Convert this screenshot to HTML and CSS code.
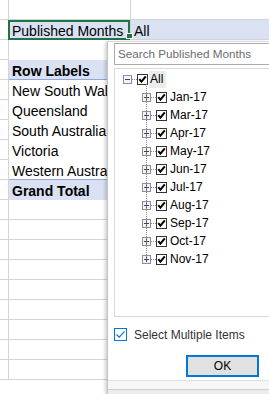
FILE: index.html
```html
<!DOCTYPE html>
<html>
<head>
<meta charset="utf-8">
<link rel="stylesheet" href="styles.css">
</head>
<body>
<svg class="defs" width="0" height="0">
  <symbol id="plus" viewBox="0 0 9 9">
    <rect x="0.5" y="0.5" width="8" height="8" fill="#f4f4f4" stroke="#8e8e8e"/>
    <path d="M2 4.5h5M4.5 2v5" stroke="#34456f" stroke-width="1"/>
  </symbol>
  <symbol id="minus" viewBox="0 0 9 9">
    <rect x="0.5" y="0.5" width="8" height="8" fill="#f4f4f4" stroke="#7f8fb0"/>
    <path d="M2 4.5h5" stroke="#34456f" stroke-width="1"/>
  </symbol>
  <symbol id="check" viewBox="0 0 11 11">
    <rect x="0.5" y="0.5" width="10" height="10" fill="#fff" stroke="#333"/>
    <path d="M2.3 5.2 L4.4 7.6 L8.8 2.4" fill="none" stroke="#000" stroke-width="2"/>
  </symbol>
</svg>

<div class="sheet">
  <div class="row"><div class="c"></div><div class="c"></div><div class="c"></div></div>
  <div class="row"><div class="c"></div><div class="c blue sel">Published Months</div><div class="c blue">All</div></div>
  <div class="row"><div class="c"></div><div class="c pv"></div><div class="c"></div></div>
  <div class="row"><div class="c"></div><div class="c pv head">Row Labels</div><div class="c"></div></div>
  <div class="row"><div class="c"></div><div class="c pv">New South Wales</div><div class="c"></div></div>
  <div class="row"><div class="c"></div><div class="c pv">Queensland</div><div class="c"></div></div>
  <div class="row"><div class="c"></div><div class="c pv">South Australia</div><div class="c"></div></div>
  <div class="row"><div class="c"></div><div class="c pv">Victoria</div><div class="c"></div></div>
  <div class="row"><div class="c"></div><div class="c pv last">Western Australia</div><div class="c"></div></div>
  <div class="row"><div class="c"></div><div class="c pv total">Grand Total</div><div class="c"></div></div>
  <div class="row"><div class="c"></div><div class="c"></div><div class="c"></div></div>
  <div class="row"><div class="c"></div><div class="c"></div><div class="c"></div></div>
  <div class="row"><div class="c"></div><div class="c"></div><div class="c"></div></div>
  <div class="row"><div class="c"></div><div class="c"></div><div class="c"></div></div>
  <div class="row"><div class="c"></div><div class="c"></div><div class="c"></div></div>
  <div class="row"><div class="c"></div><div class="c"></div><div class="c"></div></div>
  <div class="row"><div class="c"></div><div class="c"></div><div class="c"></div></div>
  <div class="row"><div class="c"></div><div class="c"></div><div class="c"></div></div>
  <div class="row"><div class="c"></div><div class="c"></div><div class="c"></div></div>
</div>

<div class="panel">
  <div class="search">Search Published Months</div>
  <div class="tree">
    <div class="node root">
      <svg class="exp"><use href="#minus"/></svg><span class="dots"></span><svg class="cb"><use href="#check"/></svg><span class="label hl">All</span>
    </div>
    <div class="children">
      <div class="node"><svg class="exp"><use href="#plus"/></svg><span class="dots"></span><svg class="cb"><use href="#check"/></svg><span class="label">Jan-17</span></div>
      <div class="node"><svg class="exp"><use href="#plus"/></svg><span class="dots"></span><svg class="cb"><use href="#check"/></svg><span class="label">Mar-17</span></div>
      <div class="node"><svg class="exp"><use href="#plus"/></svg><span class="dots"></span><svg class="cb"><use href="#check"/></svg><span class="label">Apr-17</span></div>
      <div class="node"><svg class="exp"><use href="#plus"/></svg><span class="dots"></span><svg class="cb"><use href="#check"/></svg><span class="label">May-17</span></div>
      <div class="node"><svg class="exp"><use href="#plus"/></svg><span class="dots"></span><svg class="cb"><use href="#check"/></svg><span class="label">Jun-17</span></div>
      <div class="node"><svg class="exp"><use href="#plus"/></svg><span class="dots"></span><svg class="cb"><use href="#check"/></svg><span class="label">Jul-17</span></div>
      <div class="node"><svg class="exp"><use href="#plus"/></svg><span class="dots"></span><svg class="cb"><use href="#check"/></svg><span class="label">Aug-17</span></div>
      <div class="node"><svg class="exp"><use href="#plus"/></svg><span class="dots"></span><svg class="cb"><use href="#check"/></svg><span class="label">Sep-17</span></div>
      <div class="node"><svg class="exp"><use href="#plus"/></svg><span class="dots"></span><svg class="cb"><use href="#check"/></svg><span class="label">Oct-17</span></div>
      <div class="node"><svg class="exp"><use href="#plus"/></svg><span class="dots"></span><svg class="cb"><use href="#check"/></svg><span class="label">Nov-17</span></div>
    </div>
  </div>
  <div class="multi">
    <svg class="mcb" viewBox="0 0 13 13"><rect x="0.5" y="0.5" width="12" height="12" fill="#fff" stroke="#0078d7"/><path d="M2.5 6.5 L5.2 9.2 L10.5 3.3" fill="none" stroke="#0078d7" stroke-width="1.2"/></svg>
    <span>Select Multiple Items</span>
  </div>
  <div class="actions"><button class="ok">OK</button></div>
  <div class="grip"><div class="grip-in"></div></div>
</div>
</body>
</html>
```

FILE: styles.css
```css
html, body {
  margin: 0;
  padding: 0;
  background: #fff;
}
body {
  width: 269px;
  height: 394px;
  overflow: hidden;
  position: relative;
  font-family: "Liberation Sans", Arial, sans-serif;
}
.defs {
  position: absolute;
  width: 0;
  height: 0;
}
.sheet {
  display: flex;
  flex-direction: column;
  height: 394px;
  overflow: hidden;
}
.row {
  display: grid;
  grid-template-columns: 9px 122px 138px;
  height: 20px;
  flex: none;
}
.c {
  box-sizing: border-box;
  height: 20px;
  border-right: 1px solid #d4d4d4;
  border-bottom: 1px solid #d4d4d4;
  padding: 2px 0 0 3px;
  font-size: 14px;
  line-height: 18px;
  color: #000;
  white-space: nowrap;
  overflow: hidden;
}
.row .c:last-child {
  border-right: none;
}
.c.blue {
  background: #d9e1f2;
  overflow: visible;
}
.c.sel {
  position: relative;
}
.c.sel::after {
  content: "";
  position: absolute;
  left: -1px;
  top: 0;
  right: 0;
  bottom: -1px;
  border: 2px solid #217346;
}
.c.sel::before {
  content: "";
  position: absolute;
  right: -2px;
  bottom: 1px;
  width: 5px;
  height: 4px;
  background: #217346;
  outline: 1px solid #fff;
  z-index: 1;
}
.c.pv {
  border-bottom-color: transparent;
  border-right-color: transparent;
}
.c.head {
  background: #d9e1f2;
  font-weight: bold;
  border-bottom-color: #8ea9db;
}
.c.last {
  border-bottom-color: #8ea9db;
}
.c.total {
  background: #d9e1f2;
  font-weight: bold;
  border-bottom-color: #d9e1f2;
}

/* dropdown panel */
.panel {
  position: absolute;
  left: 107px;
  top: 41px;
  right: 0;
  bottom: 0;
  box-sizing: border-box;
  background: #fff;
  border-left: 1px solid #c4c4c4;
  border-top: 1px solid #dadada;
  box-shadow: -2px 1px 3px rgba(0, 0, 0, 0.18);
  padding: 1px 0 0 6px;
  display: flex;
  flex-direction: column;
}
.search {
  box-sizing: border-box;
  height: 22px;
  border: 1px solid #ababab;
  border-right: none;
  padding: 0 0 0 3px;
  font-size: 11.7px;
  line-height: 20px;
  color: #6d6d6d;
  white-space: nowrap;
  overflow: hidden;
}
.tree {
  box-sizing: border-box;
  margin-top: 3px;
  height: 249px;
  border: 1px solid #d9d9d9;
  border-right: none;
  padding-top: 1px;
}
.node {
  display: flex;
  align-items: center;
  height: 18px;
  padding-left: 27px;
}
.node.root {
  padding-left: 8px;
}
.exp {
  width: 9px;
  height: 9px;
  flex: none;
}
.dots {
  width: 5px;
  height: 0;
  border-top: 1px dotted #8a8a8a;
  flex: none;
}
.cb {
  width: 11px;
  height: 11px;
  flex: none;
}
.label {
  font-size: 12px;
  line-height: 17px;
  color: #000;
  margin-left: 1px;
  padding: 0 2px 0 2px;
  white-space: nowrap;
}
.label.hl {
  background: #ececec;
  padding: 0 3px 0 1px;
}
.children {
  position: relative;
}
.children::before {
  content: "";
  position: absolute;
  left: 31px;
  top: -4px;
  bottom: 9px;
  border-left: 1px dotted #8a8a8a;
}
.multi {
  margin-top: 11px;
  display: flex;
  align-items: center;
  height: 13px;
  font-size: 12px;
  color: #333;
}
.mcb {
  width: 13px;
  height: 13px;
  flex: none;
  margin-right: 7px;
}
.actions {
  margin-top: 14px;
  padding-left: 72px;
  display: flex;
}
.ok {
  box-sizing: border-box;
  width: 73px;
  height: 22px;
  margin: 0;
  border: 2px solid #0078d7;
  background: #e1e1e1;
  font-family: "Liberation Sans", Arial, sans-serif;
  font-size: 12px;
  color: #000;
  padding: 0;
}
.grip {
  margin: 3px 0 0 -6px;
  flex: 1;
  border-top: 1px solid #dde2e8;
  background: #f7f7f7;
  display: flex;
  flex-direction: column;
}
.grip-in {
  margin-top: 8px;
  flex: 1;
  border-top: 1px solid #cfcfcf;
  background: #ececec;
}
```
